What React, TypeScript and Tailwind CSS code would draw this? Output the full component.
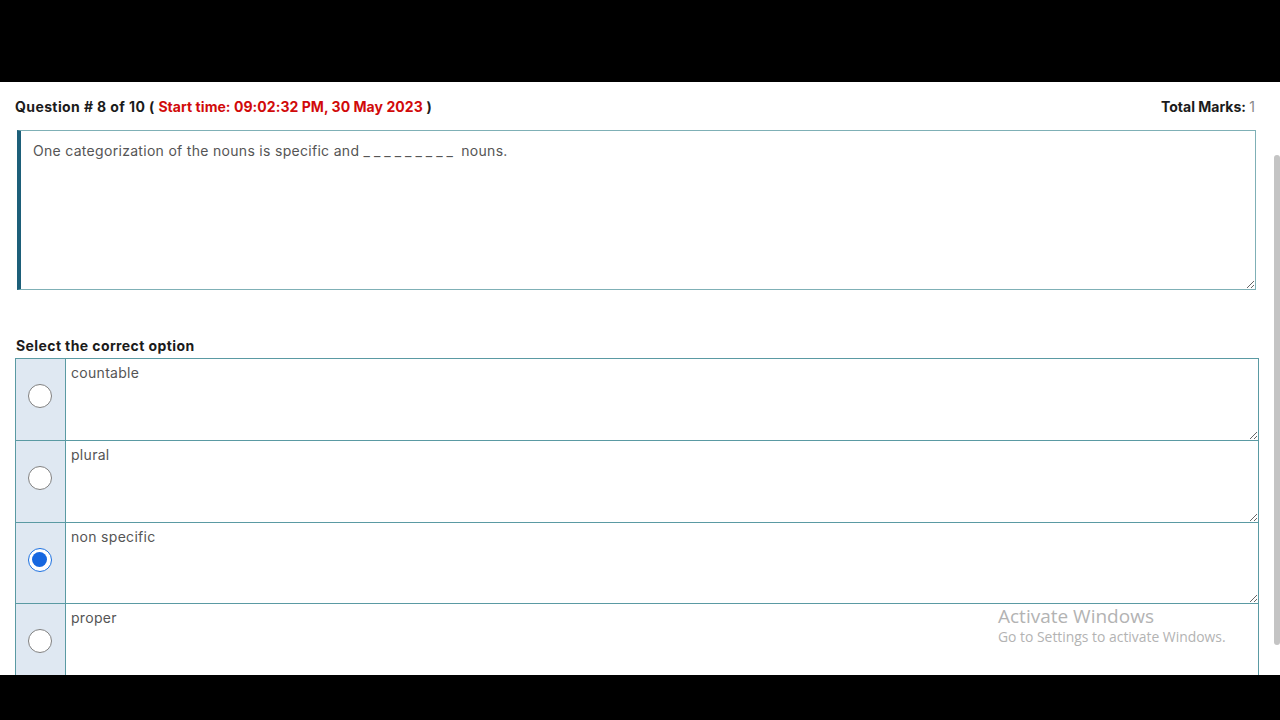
import React, { useState } from 'react';

const FONT = "font-['Inter','Liberation_Sans',sans-serif]";

const options = ['countable', 'plural', 'non specific', 'proper'];

// Radio dot drawn with plain CSS circles
const Radio = ({ checked }: { checked: boolean }) =>
  checked ? (
    <div className="w-[24px] h-[24px] rounded-full border-[1.5px] border-[#1a6fe0] bg-white flex items-center justify-center">
      <div className="w-[15px] h-[15px] rounded-full bg-[#1667e0]" />
    </div>
  ) : (
    <div className="w-[24px] h-[24px] rounded-full border border-[#808080] bg-white" />
  );

const App = () => {
  const [selected, setSelected] = useState(2);

  return (
    <div className={`h-[720px] w-[1280px] bg-black flex flex-col overflow-hidden ${FONT}`}>
      <div className="h-[82px] shrink-0" />

      <div className="relative h-[593px] shrink-0 bg-white flex overflow-hidden">
        <main className="w-[1262px] shrink-0 pl-[15px] pr-[3px]">
          {/* Header */}
          <div className="flex justify-between items-center pt-[16px] h-[34px] text-[14px] leading-[18px] text-[#1b1b1b]">
            <div className="font-bold tracking-[0.4px]">
              Question # 8 of 10 ({' '}
              <span className="text-[#d10a0a] tracking-[0.05px]">Start time: 09:02:32 PM, 30 May 2023</span> )
            </div>
            <div className="font-bold pr-[4px]">
              Total Marks: <span className="font-normal text-[#888]">1</span>
            </div>
          </div>

          {/* Question text (resizable box) */}
          <div className="mt-[14px] ml-[2px] w-[1239px] h-[160px] resize-y overflow-auto border border-[#7fb0b6] border-l-4 border-l-[#1d5f79] pl-[12px] pt-[11px] text-[14px] leading-[18px] tracking-[0.3px] text-[#555]">
            One categorization of the nouns is specific and{' '}
            <span className="tracking-[4px]">_________</span> nouns.
          </div>

          <div className="mt-[47px] ml-[1px] text-[14px] leading-[18px] font-bold text-[#1b1b1b] tracking-[0.4px]">
            Select the correct option
          </div>

          {/* Options */}
          <div className="mt-[3px] w-[1244px] border border-[#5a9aa3]">
            {options.map((opt, i) => (
              <div
                key={opt}
                className={`flex h-[81.25px] ${i > 0 ? 'border-t border-[#5a9aa3]' : ''}`}
              >
                <button
                  onClick={() => setSelected(i)}
                  className="w-[50px] shrink-0 bg-[#dfe8f2] border-r border-[#5a9aa3] flex justify-center pt-[25px] pr-[2px]"
                >
                  <Radio checked={selected === i} />
                </button>
                <div className="flex-1 h-full resize-y overflow-auto pl-[5px] pt-[5px] text-[14px] leading-[18px] tracking-[0.3px] text-[#555]">
                  {opt}
                </div>
              </div>
            ))}
          </div>
        </main>

        {/* Scrollbar */}
        <div className="flex-1 flex justify-end pt-[73px]">
          <div className="w-[6px] h-[490px] rounded-sm bg-[#c4c4c4]" />
        </div>

        {/* OS watermark */}
        <div className="absolute left-[998px] top-[522px] text-[#b3b3b3] font-['Open_Sans',sans-serif] pointer-events-none">
          <div className="text-[19px] leading-[24px]">Activate Windows</div>
          <div className="text-[13.9px] leading-[18px]">Go to Settings to activate Windows.</div>
        </div>
      </div>

      <div className="flex-1" />
    </div>
  );
};

export default App;
